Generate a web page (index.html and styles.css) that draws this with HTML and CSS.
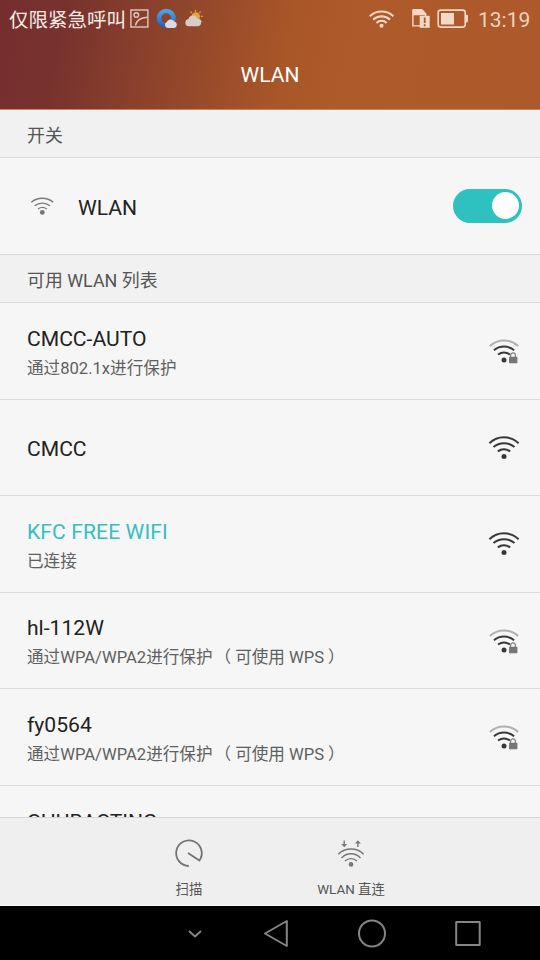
FILE: index.html
```html
<!DOCTYPE html>
<html lang="zh-CN">
<head>
<meta charset="utf-8">
<title>WLAN</title>
<link rel="stylesheet" href="styles.css">
</head>
<body>
<svg width="0" height="0" class="defs">
  <defs>
    <linearGradient id="ring" x1="0" y1="0" x2="0" y2="1"><stop offset="0" stop-color="#4aa3e6"/><stop offset="1" stop-color="#2368c4"/></linearGradient>
    <symbol id="wifi" viewBox="0 0 32 28">
      <path d="M1.4 8.2A21 21 0 0 1 30.6 8.2M5.5 12.1A16 16 0 0 1 26.5 12.1M9.8 16.4A10.5 10.5 0 0 1 22.2 16.4" fill="none" stroke="#383838" stroke-width="2"/>
      <circle cx="16" cy="21.4" r="2.5" fill="#383838"/>
    </symbol>
    <symbol id="wifi-lock" viewBox="0 0 32 28">
      <path d="M1.8 8A21 21 0 0 1 30.2 8" fill="none" stroke="#b0b0b0" stroke-width="2"/>
      <path d="M5.9 12.2A16 16 0 0 1 26.1 12.2M10 16.5A10.5 10.5 0 0 1 22 16.5" fill="none" stroke="#383838" stroke-width="2"/>
      <circle cx="16" cy="22" r="2.5" fill="#383838"/>
      <path d="M22.6 19V17.6a2.4 2.8 0 0 1 4.8 0V19" fill="none" stroke="#858585" stroke-width="1.3"/>
      <rect x="21" y="18.8" width="8.4" height="6.4" rx=".6" fill="#777"/>
    </symbol>
  </defs>
</svg>
<div class="phone">
  <header class="header">
    <div class="status">
      <span class="carrier">仅限紧急呼叫</span>
      <svg class="notices" width="76" height="20" viewBox="130 8 76 20">
        <g fill="none" stroke="#e2c7bd" stroke-width="1.4"><rect x="130.9" y="10" width="17" height="17"/><circle cx="136.3" cy="15" r="2.3"/><path d="M135.5 25.5C136.5 19.5 141 17.6 147.5 17.3"/></g>
        <circle cx="166.3" cy="18.2" r="7.2" fill="none" stroke="url(#ring)" stroke-width="4.6"/>
        <path d="M167.8 28a3.2 3.2 0 0 1-1-6.1 4.3 4.3 0 0 1 7.4-.5 3.4 3.4 0 0 1 .2 6.6z" fill="#d9dde2"/>
        <path d="M195.5 9.7v2.2M190.5 11.5l1.3 1.5M200.7 11.5l-1.4 1.6M203 16.4h-2.2M200.3 20.5l1.5 1.2" stroke="#d79a36" stroke-width="1.3"/>
        <circle cx="195.8" cy="16.5" r="4.2" fill="#e4a43b"/>
        <path d="M188.5 26.3a3.7 3.7 0 0 1-.1-7.3 4.8 4.8 0 0 1 9-.5 3.9 3.9 0 0 1-.3 7.8z" fill="#d6ccc8"/>
      </svg>
      <svg class="signals" width="102" height="22" viewBox="368 7 102 22">
        <path d="M369.8 16.2A17 17 0 0 1 393.4 16.2M373.2 19.8A12 12 0 0 1 390 19.8M376.5 22.9A7 7 0 0 1 386.6 22.9" fill="none" stroke="#f4d9c6" stroke-width="2.1"/>
        <circle cx="381.5" cy="25.8" r="2" fill="#f4d9c6"/>
        <path d="M412.9 14.7V25.9H420M425.6 16V14L422 10" fill="none" stroke="#f4d9c6" stroke-width="1.4"/>
        <path d="M412.2 10.2q0-1.2 1.2-1.2h8.4l4.4 4.6v1.6h-14z" fill="#f4d9c6"/>
        <rect x="419.7" y="15.8" width="10" height="12" fill="#f4d9c6"/>
        <path d="M424.7 17.5v5.5M424.7 24.3v2" stroke="#ad5a2b" stroke-width="1.8"/>
        <rect x="438.2" y="10.1" width="27" height="17" rx="2.5" fill="none" stroke="#f4d9c6" stroke-width="1.6"/>
        <rect x="441" y="13" width="13" height="11.5" fill="#f4d9c6"/>
        <path d="M465.5 14.8h1.2q1.3 0 1.3 1.3v5q0 1.3-1.3 1.3h-1.2z" fill="#f4d9c6"/>
      </svg>
      <span class="clock">13:19</span>
    </div>
    <h1 class="title">WLAN</h1>
  </header>
  <main class="content">
    <h2 class="section">开关</h2>
    <div class="switch-row">
      <svg width="24" height="18" viewBox="30 197 24 18">
        <path d="M31.3 202.3A17 17 0 0 1 53.3 202.3M34.6 205.8A12.5 12.5 0 0 1 50 205.8M38 209A7.5 7.5 0 0 1 46.8 209" fill="none" stroke="#7c7c7c" stroke-width="1.4"/>
        <circle cx="42.3" cy="212.4" r="2.4" fill="#777"/>
      </svg>
      <span class="name">WLAN</span>
      <span class="toggle"><span class="knob"></span></span>
    </div>
    <h2 class="section">可用 WLAN 列表</h2>
    <ul class="list">
      <li class="item"><div><div class="name">CMCC-AUTO</div><div class="sub">通过802.1x进行保护</div></div><svg class="sig"><use href="#wifi-lock"/></svg></li>
      <li class="item"><div><div class="name">CMCC</div></div><svg class="sig"><use href="#wifi"/></svg></li>
      <li class="item"><div><div class="name active">KFC FREE WIFI</div><div class="sub">已连接</div></div><svg class="sig"><use href="#wifi"/></svg></li>
      <li class="item"><div><div class="name">hl-112W</div><div class="sub">通过WPA/WPA2进行保护<span class="open">（</span>可使用 WPS<span class="close">）</span></div></div><svg class="sig"><use href="#wifi-lock"/></svg></li>
      <li class="item"><div><div class="name">fy0564</div><div class="sub">通过WPA/WPA2进行保护<span class="open">（</span>可使用 WPS<span class="close">）</span></div></div><svg class="sig"><use href="#wifi-lock"/></svg></li>
      <li class="item partial"><div class="name">CHUBACTING</div></li>
    </ul>
  </main>
  <footer class="actions">
    <div class="action">
      <svg width="32" height="30" viewBox="173 838 32 30"><path d="M188.8 866A12.8 12.8 0 1 1 199.4 860.6L188 853" fill="none" stroke="#727272" stroke-width="1.8" stroke-linejoin="round"/></svg>
      <span>扫描</span>
    </div>
    <div class="action">
      <svg width="30" height="30" viewBox="336.3 838 30 30">
        <path d="M338.6 854.3A18 18 0 0 1 364 854.3M341.8 857.9A13 13 0 0 1 360.8 857.9M345.3 861.1A8.5 8.5 0 0 1 357.3 861.1" fill="none" stroke="#777" stroke-width="1.4"/>
        <circle cx="351.3" cy="864.4" r="2.3" fill="#777"/>
        <path d="M344.5 840.5v5M358.2 847v-5" stroke="#777" stroke-width="1.4"/>
        <path d="M341.5 844h6l-3 3.2zM355.2 843.5h6l-3-3.2z" fill="#777"/>
      </svg>
      <span>WLAN 直连</span>
    </div>
  </footer>
  <nav class="nav">
    <svg width="540" height="54" viewBox="0 906 540 54" fill="none" stroke="#858585" stroke-width="2" stroke-linejoin="round">
      <path d="M189 931l6 5.5 6-5.5"/>
      <path d="M265 933.5L286.8 921V946z"/>
      <circle cx="372" cy="933.5" r="13"/>
      <rect x="456.2" y="922" width="23.5" height="23"/>
    </svg>
  </nav>
</div>
</body>
</html>
```
FILE: styles.css
```css
* { box-sizing: border-box; }
body { margin: 0; font-family: Roboto, "Noto Sans CJK SC", sans-serif; color: #222; }
h1, h2, ul { margin: 0; padding: 0; font-weight: 400; list-style: none; }
svg { display: block; flex: none; }
.defs { position: absolute; }
.phone { width: 540px; height: 960px; display: flex; flex-direction: column; overflow: hidden; background: #f6f6f6; }

.header { height: 110px; flex: none; color: #fff; background: linear-gradient(102deg, #752e2e 0%, #78322e 12%, #8a412c 28%, #9d4e29 43%, #a95628 53%, #ae5a2b 64%, #ad592b 100%); border-bottom: 1px solid #c98467; }
.status { height: 39px; display: flex; align-items: center; padding: 0 9px; }
.carrier { width: 121px; padding-top: 2px; font-size: 19.5px; line-height: 38px; white-space: nowrap; color: #f8ece6; }
.notices { margin-top: -3px; }
.signals { margin: -3px 0 0 162px; }
.clock { margin-left: 8px; padding-top: 2px; font-size: 21px; line-height: 39px; color: #f0d3bf; }
.title { font-size: 21px; line-height: 72px; text-align: center; }

.content { flex: 1; min-height: 0; overflow: hidden; }
.section { height: 48px; padding-left: 27px; font-size: 17.9px; line-height: 51px; color: #555; background: #f1f1f1; border-bottom: 1px solid #dcdcdc; }
.switch-row { height: 97px; display: flex; align-items: center; padding: 0 18px 0 30px; border-bottom: 1px solid #dcdcdc; }
.switch-row .name { margin-left: 24px; flex: 1; padding-top: 3px; }
.name { font-size: 21.1px; line-height: 28px; }
.name.active { color: #35bfc0; letter-spacing: .1px; }
.sub { font-size: 16.6px; line-height: 24px; margin-top: 4px; color: #606060; white-space: nowrap; }
.open { margin: 0 4px 0 2px; }
.close { margin-left: 4px; }
.toggle { width: 69px; height: 34px; padding: 3px; border-radius: 17px; background: #2fc0c0; display: flex; justify-content: flex-end; }
.knob { width: 27px; height: 27px; border-radius: 50%; background: #fff; }
.item { height: 97px; padding: 3px 20px 0 27px; display: flex; align-items: center; justify-content: space-between; border-bottom: 1px solid #dcdcdc; }
.item:nth-child(even) { height: 96px; }
.item.partial { align-items: flex-start; padding-top: 22px; }
.sig { width: 32px; height: 28px; margin-top: -1px; }

.actions { height: 89px; flex: none; padding: 20px 108px 0; display: grid; grid-template-columns: 1fr 1fr; background: #efefef; border-top: 1px solid #d6d6d6; border-bottom: 1px solid #fafafa; }
.action { display: flex; flex-direction: column; align-items: center; font-size: 13.4px; line-height: 20px; color: #555; gap: 12px; }
.nav { height: 54px; flex: none; background: #000; }
```
